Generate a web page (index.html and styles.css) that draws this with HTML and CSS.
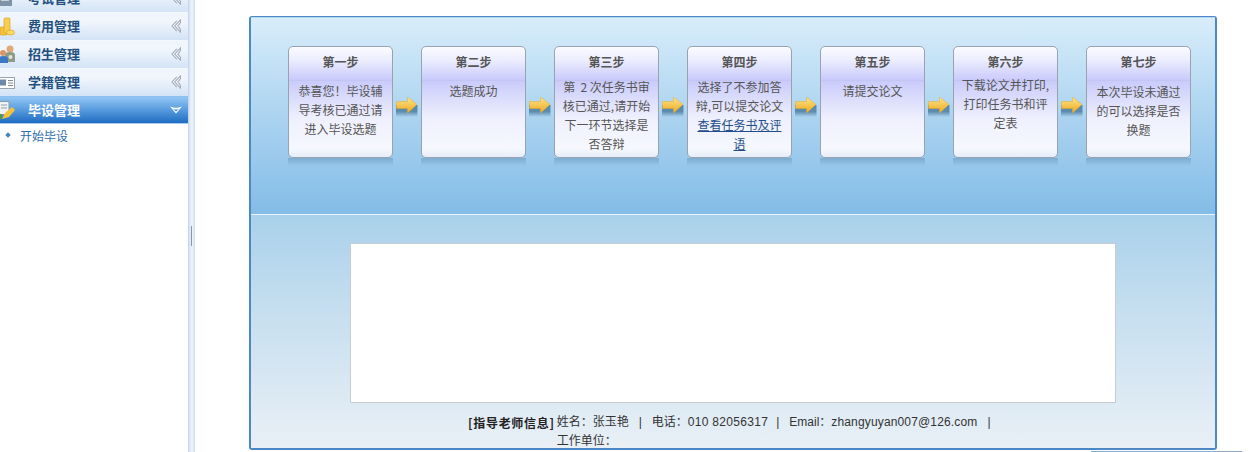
FILE: index.html
```html
<!DOCTYPE html>
<html lang="zh-CN">
<head>
<meta charset="utf-8">
<title>毕设管理</title>
<link rel="stylesheet" href="styles.css">
</head>
<body>
<div class="layout">
  <nav class="sidebar">
    <div class="menu-row">
      <svg class="menu-icon" viewBox="0 0 20 20"><rect x="3" y="7" width="14" height="10" fill="#7f93a8"/><rect x="6" y="4" width="8" height="8" fill="#c9d3dc"/></svg>
      <span class="menu-label">考试管理</span>
      <svg class="chev" viewBox="0 0 10 14"><path d="M9.500 .8 3.800 7l5.700 6.200V10.500L7 7l2.500-3.500zM5.800 1.800 1 7l4.800 5.200" fill="#f0f4f9" stroke="#a3adb9" stroke-width="1.100"/></svg>
    </div>
    <div class="menu-row">
      <svg class="menu-icon" viewBox="0 0 20 20"><rect x="5" y="10" width="7" height="8" rx="1" fill="#f5c33b" stroke="#d59a1c" stroke-width=".6"/><rect x="9" y="1" width="6" height="15" rx="1" fill="#f8cf4a" stroke="#d59a1c" stroke-width=".6"/><ellipse cx="15.500" cy="15.500" rx="4" ry="2.500" fill="#fbd95f" stroke="#d59a1c" stroke-width=".6"/></svg>
      <span class="menu-label">费用管理</span>
      <svg class="chev" viewBox="0 0 10 14"><path d="M9.500 .8 3.800 7l5.700 6.200V10.500L7 7l2.500-3.500zM5.800 1.800 1 7l4.800 5.200" fill="#f0f4f9" stroke="#a3adb9" stroke-width="1.100"/></svg>
    </div>
    <div class="menu-row">
      <svg class="menu-icon" viewBox="0 0 20 20"><circle cx="15" cy="4" r="3.500" fill="#e0a878"/><path d="M10 17V10q0-3 5-3t5 3v7z" fill="#8c9a88"/><circle cx="15.500" cy="12" r="2" fill="#dfe5dc"/><circle cx="8" cy="8" r="3" fill="#d9966a"/><path d="M3 18v-4q0-3 5-3t5 3v4z" fill="#3b78c4"/></svg>
      <span class="menu-label">招生管理</span>
      <svg class="chev" viewBox="0 0 10 14"><path d="M9.500 .8 3.800 7l5.700 6.200V10.500L7 7l2.500-3.500zM5.800 1.800 1 7l4.800 5.200" fill="#f0f4f9" stroke="#a3adb9" stroke-width="1.100"/></svg>
    </div>
    <div class="menu-row">
      <svg class="menu-icon" viewBox="0 0 20 20"><rect x="1" y="4.500" width="18.500" height="11" fill="#fff" stroke="#9aa4ad"/><rect x="5" y="6.500" width="6" height="6" fill="#6d87a8"/><path d="M13 7.500h5M13 10h5M13 12.500h5" stroke="#7d8994"/></svg>
      <span class="menu-label">学籍管理</span>
      <svg class="chev" viewBox="0 0 10 14"><path d="M9.500 .8 3.800 7l5.700 6.200V10.500L7 7l2.500-3.500zM5.800 1.800 1 7l4.800 5.200" fill="#f0f4f9" stroke="#a3adb9" stroke-width="1.100"/></svg>
    </div>
    <div class="menu-row menu-row-active">
      <svg class="menu-icon" viewBox="0 0 20 20"><path d="M4 1.500h10v13H4z" fill="#eef2f5" stroke="#8a98a3"/><path d="M6 5h6M6 8h6" stroke="#93a0aa"/><path d="M7 19l3-6 7-6 3 3-6 7z" fill="#f4c23a"/><rect x="1" y="14" width="6" height="5" fill="#4f9b4a"/></svg>
      <span class="menu-label">毕设管理</span>
      <svg class="chev-down" viewBox="0 0 14 10"><path d="M1 1.500q6 2.500 12 0L7 8.500z" fill="#fff"/><path d="M4 4q3 1 6 0L7 6.500z" fill="#3e86d4"/></svg>
    </div>
    <div class="submenu-item"><span class="bullet"></span>开始毕设</div>
  </nav>
  <div class="splitter"><span class="splitter-grip"></span></div>
  <main class="main">
    <section class="panel">
      <div class="steps">
        <div class="step">
          <div class="card">
            <div class="card-title">第一步</div>
            <div class="card-body">恭喜您！毕设辅<br>导考核已通过请<br>进入毕设选题</div>
          </div>
        </div>
        <svg class="arrow" viewBox="0 0 22 20"><defs><linearGradient id="ar" x1="0" y1="0" x2="0" y2="1"><stop offset="0" stop-color="#fde68a"/><stop offset="1" stop-color="#eda81f"/></linearGradient><linearGradient id="sh" x1="0" y1="0" x2="0" y2="1"><stop offset="0" stop-color="#4f7fa3" stop-opacity=".9"/><stop offset=".55" stop-color="#4f7fa3" stop-opacity=".85"/><stop offset="1" stop-color="#4f7fa3" stop-opacity="0"/></linearGradient></defs><path d="M0 8h21.500v12H0z" fill="url(#sh)"/><path d="M.5 4.500h11V0L21 7.500 11.500 16v-4.500H.5z" fill="url(#ar)" stroke="#e5a92c" stroke-width=".5"/></svg>
        <div class="step">
          <div class="card">
            <div class="card-title">第二步</div>
            <div class="card-body">选题成功</div>
          </div>
        </div>
        <svg class="arrow" viewBox="0 0 22 20"><path d="M0 8h21.500v12H0z" fill="url(#sh)"/><path d="M.5 4.500h11V0L21 7.500 11.500 16v-4.500H.5z" fill="url(#ar)" stroke="#e5a92c" stroke-width=".5"/></svg>
        <div class="step">
          <div class="card">
            <div class="card-title">第三步</div>
            <div class="card-body card-body-four">第&nbsp; 2 次任务书审<br>核已通过,请开始<br>下一环节选择是<br>否答辩</div>
          </div>
        </div>
        <svg class="arrow" viewBox="0 0 22 20"><path d="M0 8h21.500v12H0z" fill="url(#sh)"/><path d="M.5 4.500h11V0L21 7.500 11.500 16v-4.500H.5z" fill="url(#ar)" stroke="#e5a92c" stroke-width=".5"/></svg>
        <div class="step">
          <div class="card">
            <div class="card-title">第四步</div>
            <div class="card-body card-body-four">选择了不参加答<br>辩,可以提交论文<br><a class="card-link" href="#">查看任务书及评<br>语</a></div>
          </div>
        </div>
        <svg class="arrow" viewBox="0 0 22 20"><path d="M0 8h21.500v12H0z" fill="url(#sh)"/><path d="M.5 4.500h11V0L21 7.500 11.500 16v-4.500H.5z" fill="url(#ar)" stroke="#e5a92c" stroke-width=".5"/></svg>
        <div class="step">
          <div class="card">
            <div class="card-title">第五步</div>
            <div class="card-body">请提交论文</div>
          </div>
        </div>
        <svg class="arrow" viewBox="0 0 22 20"><path d="M0 8h21.500v12H0z" fill="url(#sh)"/><path d="M.5 4.500h11V0L21 7.500 11.500 16v-4.500H.5z" fill="url(#ar)" stroke="#e5a92c" stroke-width=".5"/></svg>
        <div class="step">
          <div class="card">
            <div class="card-title">第六步</div>
            <div class="card-body card-body-tight">下载论文并打印,<br>打印任务书和评<br>定表</div>
          </div>
        </div>
        <svg class="arrow" viewBox="0 0 22 20"><path d="M0 8h21.500v12H0z" fill="url(#sh)"/><path d="M.5 4.500h11V0L21 7.500 11.500 16v-4.500H.5z" fill="url(#ar)" stroke="#e5a92c" stroke-width=".5"/></svg>
        <div class="step">
          <div class="card">
            <div class="card-title">第七步</div>
            <div class="card-body card-body-low">本次毕设未通过<br>的可以选择是否<br>换题</div>
          </div>
        </div>
      </div>
      <div class="lower">
        <div class="content-box"></div>
        <div class="teacher">
          <strong class="teacher-label">[指导老师信息]</strong>
          <div class="teacher-lines">
            <div>姓名：张玉艳 &nbsp;&nbsp;|&nbsp;&nbsp; 电话：<span class="phone">010 82056317</span><span class="sep-tight"> &nbsp;&nbsp;|&nbsp;&nbsp; </span>Email：<span class="email">zhangyuyan007@126.com</span> &nbsp;&nbsp;|</div>
            <div>工作单位：</div>
          </div>
        </div>
      </div>
    </section>
    <div class="edge-line"></div>
  </main>
</div>
</body>
</html>
```

FILE: styles.css
```css
* { box-sizing: border-box; }
html, body { margin: 0; height: 452px; overflow: hidden; background: #fff; }
body { font: 12px/19px "Liberation Sans", "Noto Sans CJK SC", sans-serif; color: #333; }
.layout { display: flex; height: 452px; }

.sidebar { width: 188px; flex: none; margin-top: -16px; overflow: hidden; }
.menu-row { display: flex; align-items: center; height: 28px; padding-right: 7px; border-top: 1px solid #f4f8fd; background: linear-gradient(#eff5fc 0, #f1f6fc 30%, #d3e3f6 100%); }
.menu-icon { width: 20px; height: 20px; margin-left: -5px; flex: none; }
.menu-label { margin: -2px 0 0 13px; flex: 1; font: bold 13px/26px "Noto Sans CJK SC", sans-serif; color: #24507f; }
.chev { width: 10px; height: 14px; margin-top: -2px; flex: none; }
.chev-down { width: 14px; height: 10px; margin-right: -2px; flex: none; }
.menu-row-active { border-top-color: #8dc0ee; background: linear-gradient(#93c6f3 0, #5d9fe0 45%, #1f6cc3 100%); border-bottom: 1px solid #a9cdf0; }
.menu-row-active .menu-label { margin-top: 0; color: #fff; }
.submenu-item { display: flex; align-items: center; height: 24px; margin-top: -1px; padding-left: 6px; color: #2f6ea8; font-family: "Noto Sans CJK SC", sans-serif; }
.bullet { width: 4px; height: 4px; margin-right: 10px; background: #4a86b8; transform: rotate(45deg); }

.splitter { width: 7px; flex: none; display: flex; align-items: center; justify-content: center; border-left: 1px solid #c8d8ea; background: linear-gradient(90deg, #d3e1f5, #eef4fc 50%, #cddcf2); }
.splitter-grip { width: 1px; height: 20px; margin: 19px 1px 0 0; background: #8a97a8; }

.main { flex: 1; min-width: 0; padding: 16px 0 0 54px; }
.panel { display: flex; flex-direction: column; width: 968px; height: 434px; border: 2px solid #4d88c6; border-top-width: 1px; border-radius: 3px; overflow: hidden; }
.steps { display: flex; align-items: flex-start; height: 198px; padding: 28px 0 0 37px; border-top: 1px solid #b8d8f2; border-bottom: 1px solid #e8f3fb; background: linear-gradient(#d8edfb 0, #b0d6f1 45%, #83bce7 100%); }
.step { width: 105px; flex: none; padding-bottom: 8px; background: linear-gradient(rgba(60,110,150,.32), rgba(60,110,150,0)) no-repeat 0 100% / 100% 8px; }
.card { display: flex; flex-direction: column; height: 112px; border: 1px solid #99a3ad; border-radius: 5px; background: linear-gradient(#fafbff 0, #ecedfe 12%, #c9cafb 30%, #d3d5fb 40%, #eff0fd 65%, #f6f8fe 92%, #e6edf8 100%); }
.card-title { height: 34px; flex: none; padding-top: 5px; border-bottom: 1px solid #c3c6f2; text-align: center; font: bold 12px/19px "Noto Sans CJK SC", sans-serif; color: #555; }
.card-body { margin-top: -3px; padding-top: 3px; text-align: center; white-space: nowrap; font: 12px/19px "Noto Sans CJK SC", sans-serif; color: #555; }
.card-body-four { padding-top: 0; margin-top: -4px; }
.card-body-tight { margin-top: -6px; padding-top: 0; }
.card-body-low { margin-top: -2px; padding-top: 3px; }
.card-link { color: #1f4e8c; text-decoration: underline; }
.arrow { width: 22px; height: 20px; margin: 51px 3px 0 3px; flex: none; }

.lower { flex: 1; min-height: 0; overflow: hidden; padding: 28px 0 0 99px; background: linear-gradient(#a9d1eb 0, #c5deef 40%, #e9f0f6 100%); }
.content-box { width: 766px; height: 160px; background: #fff; border: 1px solid #c8ccd0; }
.teacher { display: flex; margin: 10px 0 0 118px; white-space: nowrap; }
.teacher-label { font-family: "Noto Sans CJK SC", sans-serif; letter-spacing: .7px; margin-right: 2px; color: #222; }
.phone { letter-spacing: .3px; }
.sep-tight { margin-left: -2px; }
.email { letter-spacing: .15px; }
.edge-line { width: 151px; height: 1px; margin: 1px 0 0 842px; background: #8da9c6; }
```
